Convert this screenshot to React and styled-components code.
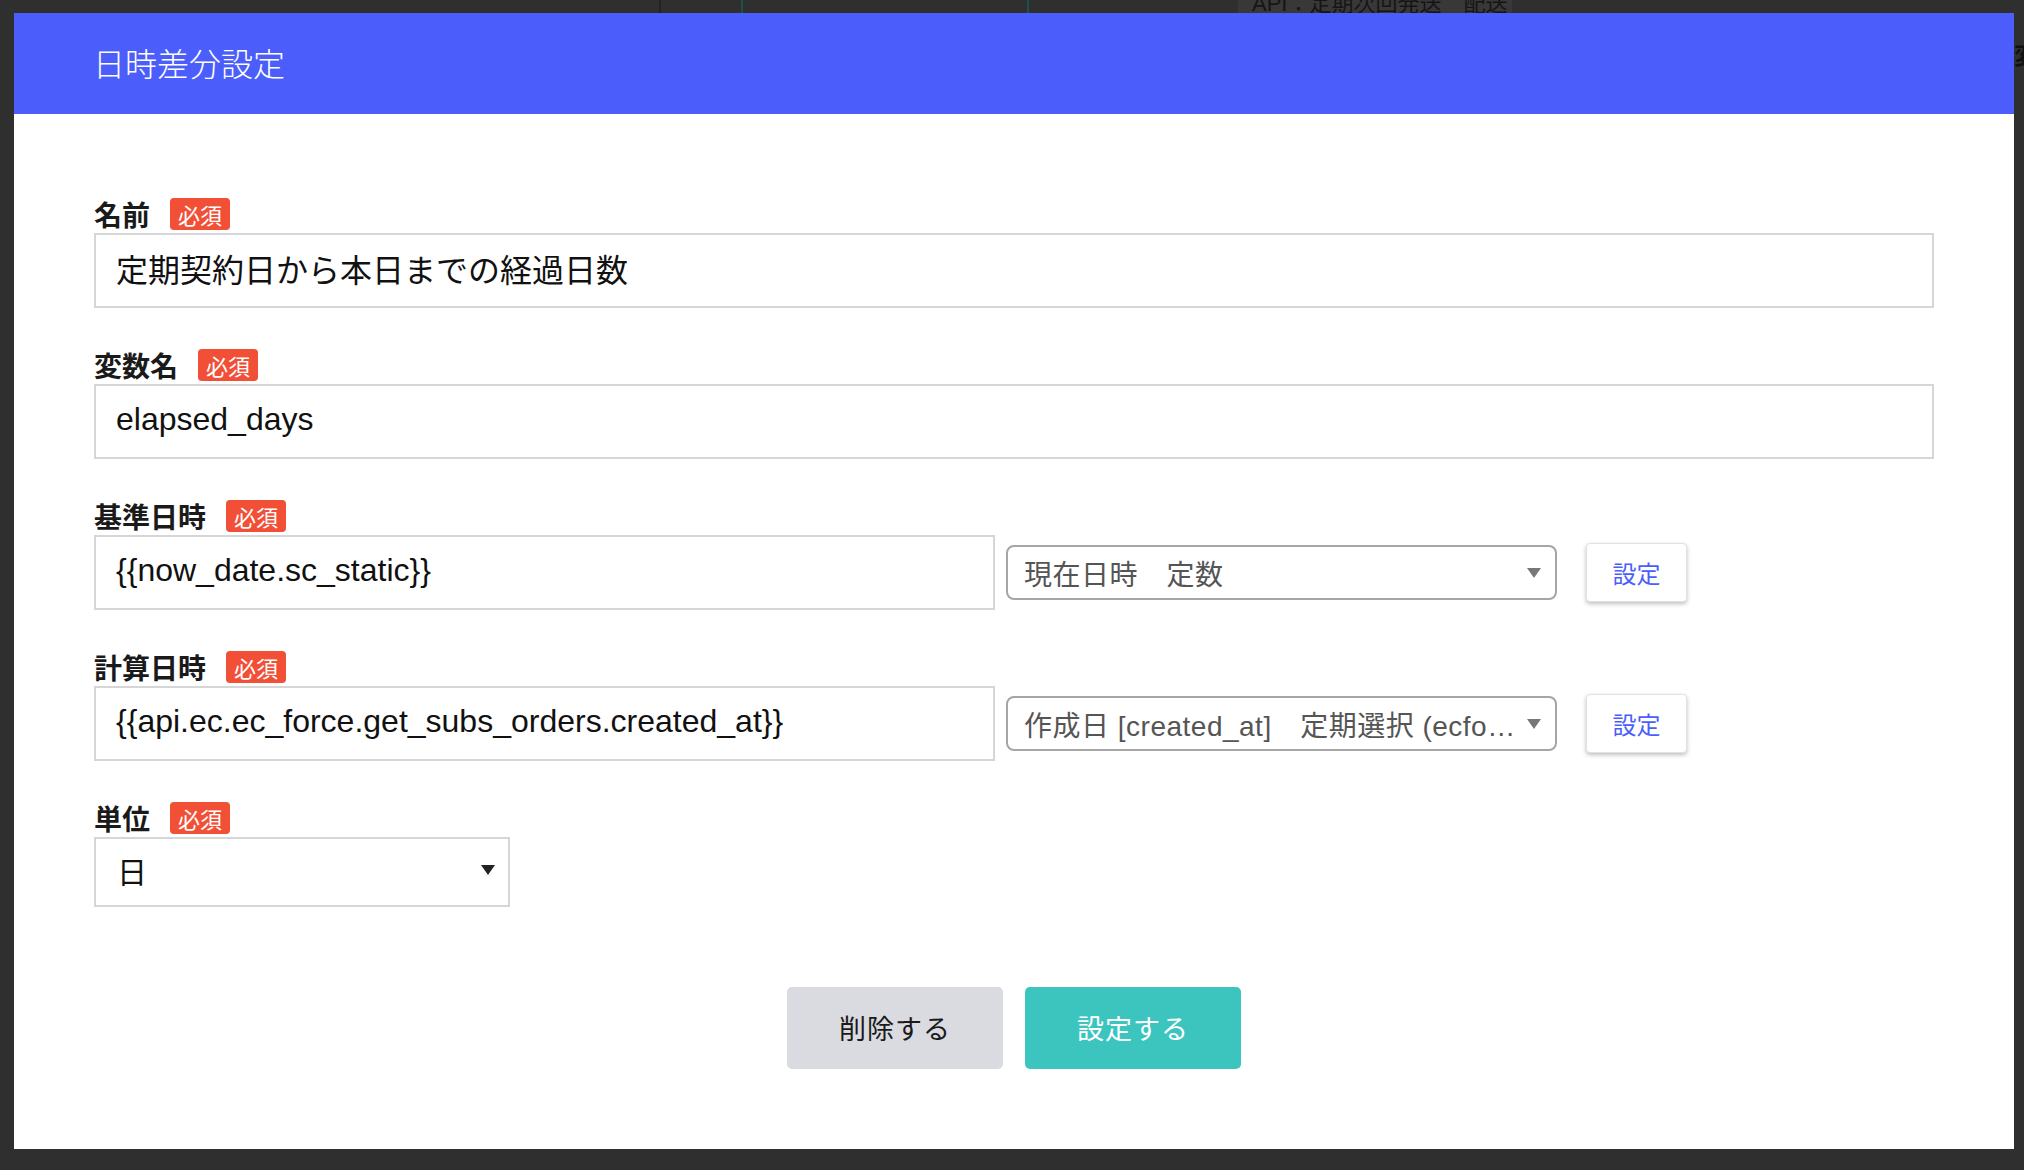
import React from "react";
import styled, { createGlobalStyle, css } from "styled-components";

const GlobalStyle = createGlobalStyle`
  html, body { margin: 0; padding: 0; }
  body {
    background: #2f2f2f;
    font-family: "Liberation Sans", "Noto Sans CJK JP", sans-serif;
  }
  * { box-sizing: border-box; }
`;

const Page = styled.div`
  position: relative;
  width: 2024px;
  height: 1170px;
  overflow: hidden;
  padding: 13px 10px 0 14px;
  background: #2f2f2f;
`;

const Behind = styled.div`
  position: absolute;
  inset: 0;
  z-index: 0;
`;

const BehindLine = styled.div`
  position: absolute;
  top: 0;
  left: ${(p) => p.$x}px;
  width: 2px;
  height: 13px;
  background: ${(p) => p.$color || "#222"};
`;

const BehindCard = styled.div`
  position: absolute;
  top: -12px;
  left: 1238px;
  width: 274px;
  height: 25px;
  background: #383838;
  color: #151515;
  font-size: 22px;
  padding-left: 14px;
  white-space: nowrap;
  line-height: 32px;
`;

const BehindGlyph = styled.div`
  position: absolute;
  top: 36px;
  left: 2014px;
  color: #111;
  font-size: 24px;
  font-weight: bold;
`;

const Modal = styled.div`
  position: relative;
  z-index: 1;
  width: 2000px;
  height: 1136px;
  background: #fff;
  display: flex;
  flex-direction: column;
`;

const Header = styled.div`
  height: 101px;
  background: #4b5efc;
  display: flex;
  align-items: center;
  padding: 0 0 4px 79px;
  color: #fff;
  font-size: 32px;
  font-weight: 300;
`;

const Body = styled.div`
  padding: 84px 80px 0;
  display: flex;
  flex-direction: column;
`;

const Fields = styled.div`
  display: flex;
  flex-direction: column;
  gap: 41px;
`;

const Field = styled.div`
  display: flex;
  flex-direction: column;
`;

const LabelRow = styled.div`
  display: flex;
  align-items: center;
  gap: 20px;
  height: 32px;
  margin-bottom: 3px;
`;

const Label = styled.span`
  font-size: 28px;
  font-weight: bold;
  color: #1a1a1a;
`;

const Badge = styled.span`
  display: inline-flex;
  align-items: center;
  height: 32px;
  padding: 0 8px;
  background: #f24f37;
  color: #fff;
  font-size: 22px;
  border-radius: 4px;
`;

const TextInput = styled.input`
  width: ${(p) => p.$width || "100%"};
  height: 75px;
  border: 2px solid #d6d6d6;
  border-radius: 0;
  padding: 0 20px 5px;
  font-family: inherit;
  font-size: 32px;
  color: #111;
  background: #fff;
  outline: none;
`;

const Row = styled.div`
  display: flex;
  align-items: center;
`;

const SelectBox = styled.div`
  margin-left: 11px;
  width: 551px;
  height: 55px;
  border: 2px solid #a5a5a5;
  border-radius: 8px;
  padding: 0 14px 0 16px;
  display: flex;
  align-items: center;
  gap: 10px;
  font-size: 28px;
  letter-spacing: 0.5px;
  color: #555;
  background: #fff;
`;

const SelectText = styled.span`
  flex: 1;
  min-width: 0;
  white-space: pre;
  overflow: hidden;
  text-overflow: ellipsis;
`;

const SmallButton = styled.button`
  margin-left: 29px;
  width: 101px;
  height: 59px;
  border: 1px solid #e2e2e2;
  border-radius: 4px;
  background: #fff;
  box-shadow: 0 2px 4px rgba(0, 0, 0, 0.25);
  color: #4b5efc;
  font-family: inherit;
  font-size: 24px;
  cursor: pointer;
`;

const UnitSelect = styled.div`
  width: 416px;
  height: 70px;
  border: 2px solid #d6d6d6;
  padding: 0 13px 5px 21px;
  display: flex;
  align-items: center;
  justify-content: space-between;
  font-size: 30px;
  color: #111;
`;

const Actions = styled.div`
  margin-top: 80px;
  display: flex;
  justify-content: center;
  gap: 22px;
`;

const ActionButton = styled.button`
  width: 216px;
  height: 82px;
  border: none;
  border-radius: 5px;
  padding-bottom: 3px;
  font-family: inherit;
  font-size: 27px;
  letter-spacing: 1px;
  cursor: pointer;
  ${(p) =>
    p.$variant === "primary"
      ? css`
          background: #3cc5bf;
          color: #fff;
        `
      : css`
          background: #d9dbe0;
          color: #1a1a1a;
        `}
`;

const Caret = ({ color = "#777", w = 14, h = 10 }) => (
  <svg width={w} height={h} viewBox="0 0 14 10" style={{ flex: "none" }}>
    <polygon points="0,0 14,0 7,10" fill={color} />
  </svg>
);

const FieldLabel = ({ children }) => (
  <LabelRow>
    <Label>{children}</Label>
    <Badge>必須</Badge>
  </LabelRow>
);

export default function App() {
  return (
    <>
      <GlobalStyle />
      <Page>
        <Behind>
          <BehindLine $x={659} />
          <BehindLine $x={741} $color="#1f4f4c" />
          <BehindLine $x={1027} $color="#1f4f4c" />
          <BehindLine $x={1510} $color="#262626" />
          <BehindCard>API：定期次回発送　配送</BehindCard>
          <BehindGlyph>変</BehindGlyph>
        </Behind>
        <Modal>
          <Header>日時差分設定</Header>
          <Body>
            <Fields>
              <Field>
                <FieldLabel>名前</FieldLabel>
                <TextInput readOnly value="定期契約日から本日までの経過日数" />
              </Field>
              <Field>
                <FieldLabel>変数名</FieldLabel>
                <TextInput readOnly value="elapsed_days" />
              </Field>
              <Field>
                <FieldLabel>基準日時</FieldLabel>
                <Row>
                  <TextInput $width="901px" readOnly value="{{now_date.sc_static}}" />
                  <SelectBox>
                    <SelectText>現在日時　定数</SelectText>
                    <Caret />
                  </SelectBox>
                  <SmallButton>設定</SmallButton>
                </Row>
              </Field>
              <Field>
                <FieldLabel>計算日時</FieldLabel>
                <Row>
                  <TextInput
                    $width="901px"
                    readOnly
                    value="{{api.ec.ec_force.get_subs_orders.created_at}}"
                  />
                  <SelectBox>
                    <SelectText>作成日 [created_at]　定期選択 (ecforce)</SelectText>
                    <Caret />
                  </SelectBox>
                  <SmallButton>設定</SmallButton>
                </Row>
              </Field>
              <Field>
                <FieldLabel>単位</FieldLabel>
                <UnitSelect>
                  <span>日</span>
                  <Caret color="#222" w={14} h={12} />
                </UnitSelect>
              </Field>
            </Fields>
            <Actions>
              <ActionButton>削除する</ActionButton>
              <ActionButton $variant="primary">設定する</ActionButton>
            </Actions>
          </Body>
        </Modal>
      </Page>
    </>
  );
}
